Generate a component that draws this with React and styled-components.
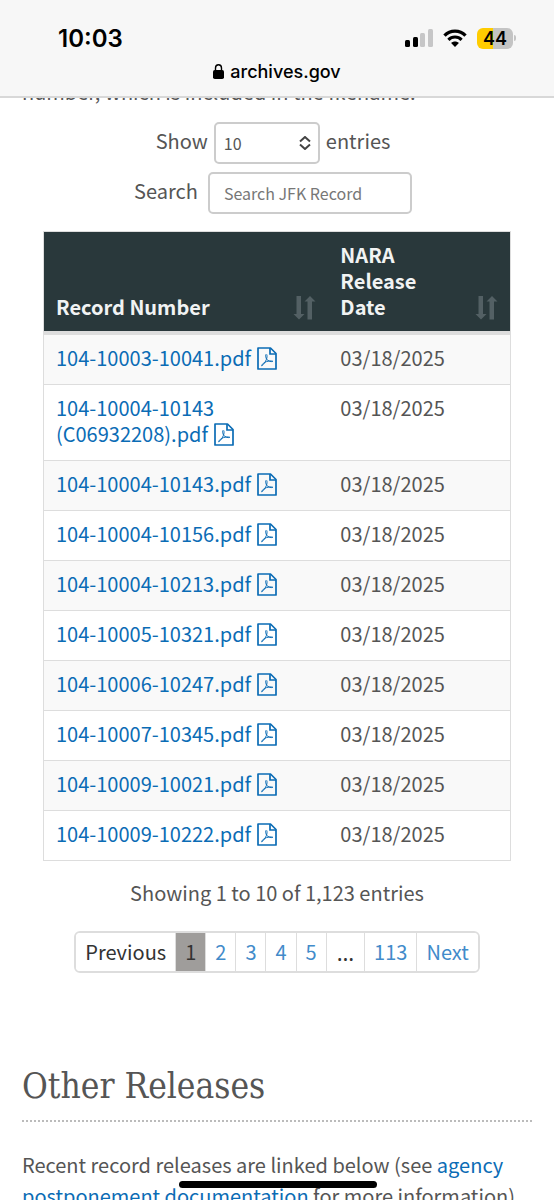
import { useState } from "react";
import styled, { createGlobalStyle } from "styled-components";

const records = [
  "104-10003-10041.pdf",
  "104-10004-10143 (C06932208).pdf",
  "104-10004-10143.pdf",
  "104-10004-10156.pdf",
  "104-10004-10213.pdf",
  "104-10005-10321.pdf",
  "104-10006-10247.pdf",
  "104-10007-10345.pdf",
  "104-10009-10021.pdf",
  "104-10009-10222.pdf",
];

const pages = ["1", "2", "3", "4", "5"];

const StatusBar = () => (
  <Status>
    <Clock>10:03</Clock>
    <StatusIcons>
      <svg width="28" height="18" viewBox="0 0 28 18">
        <rect x="0" y="11" width="5" height="7" rx="1.5" fill="#000" />
        <rect x="8" y="8" width="5" height="10" rx="1.5" fill="#000" />
        <rect x="15" y="4" width="5" height="14" rx="1.5" fill="#c6c6c7" />
        <rect x="23" y="0" width="5" height="18" rx="1.5" fill="#c6c6c7" />
      </svg>
      <svg width="24" height="18" viewBox="0 0 24 18" fill="none">
        <path d="M1.5 6.6C7.2.6 16.8.6 22.5 6.6" stroke="#000" strokeWidth="3.3" />
        <path d="M5.4 10.8c3.6-3.7 9.6-3.7 13.2 0" stroke="#000" strokeWidth="3.1" />
        <path d="M12 18l-3.9-4c2.2-2 5.6-2 7.8 0z" fill="#000" />
      </svg>
      <Battery>
        <Level>44</Level>
        <Tip />
      </Battery>
    </StatusIcons>
  </Status>
);

const PdfIcon = () => (
  <PdfSvg width="20" height="23" viewBox="0 0 20 23" fill="none" stroke="currentColor">
    <path d="M1 1h12.5L19 6.5V22H1z" strokeWidth="1.7" strokeLinejoin="round" />
    <path d="M13 1v6h6" strokeWidth="1.7" />
    <path
      d="M9 7.3c-.8 1.2-.3 3 .5 4.700M9.800 7.500c.4 1.500.3 3-.3 4.700-1 2.500-2.700 5.500-4.900 6.600.6-1.900 2.500-3.500 4.900-4.200 2.300-.6 4.600-.9 6.300-.3-1.800.9-4.700-.3-6.300-2.300"
      strokeWidth="1"
    />
  </PdfSvg>
);

const SortIcon = () => (
  <svg width="23" height="24" viewBox="0 0 23 24" fill="currentColor">
    <path d="M3.5 0h4.500v18h3.500L6 23.500.5 18h3z" />
    <path d="M14.500 23.500h4.500v-18h3.500L17 0l-5.500 5.500h3z" />
  </svg>
);

const App = () => {
  const [page, setPage] = useState("1");
  return (
    <Screen>
      <GlobalStyle />
      <Header>
        <StatusBar />
        <Address>
          <svg width="11" height="15" viewBox="0 0 11 15">
            <rect x="0" y="6" width="11" height="9" rx="1.8" fill="#000" />
            <path d="M2.5 7V4a3 3.2 0 0 1 6 0v3" fill="none" stroke="#000" strokeWidth="1.4" />
          </svg>
          archives.gov
        </Address>
      </Header>
      <Content>
        <Intro>number, which is included in the filename.</Intro>
        <Controls>
          <Control>
            <label htmlFor="length">Show</label>
            <SelectBox>
              <Select id="length" defaultValue="10">
                <option>10</option>
                <option>25</option>
                <option>50</option>
              </Select>
              <Chevrons width="12" height="14" viewBox="0 0 12 14">
                <path d="M1 5.5l5-4.5 5 4.5M1 8.5l5 4.5 5-4.5" />
              </Chevrons>
            </SelectBox>
            <label htmlFor="length">entries</label>
          </Control>
          <Control>
            <label htmlFor="search">Search</label>
            <SearchInput id="search" type="search" placeholder="Search JFK Record" />
          </Control>
        </Controls>
        <TableArea>
          <Table>
            <thead>
              <tr>
                <Th $width="61%">
                  <Sort>
                    Record Number
                    <SortIcon />
                  </Sort>
                </Th>
                <Th>
                  <Sort>
                    <span>NARA Release Date</span>
                    <SortIcon />
                  </Sort>
                </Th>
              </tr>
            </thead>
            <tbody>
              {records.map((record) => (
                <Row key={record}>
                  <Td>
                    <Link href="#">
                      {record}
                      <PdfIcon />
                    </Link>
                  </Td>
                  <Td>03/18/2025</Td>
                </Row>
              ))}
            </tbody>
          </Table>
          <Info>Showing 1 to 10 of 1,123 entries</Info>
          <Pagination>
            <PageButton $muted>Previous</PageButton>
            {pages.map((item) => (
              <PageButton key={item} $active={item === page} onClick={() => setPage(item)}>
                {item}
              </PageButton>
            ))}
            <Ellipsis $muted>…</Ellipsis>
            <PageButton $active={page === "113"} onClick={() => setPage("113")}>
              113
            </PageButton>
            <PageButton>Next</PageButton>
          </Pagination>
        </TableArea>
        <Heading>Other Releases</Heading>
        <Paragraph>
          Recent record releases are linked below (see{" "}
          <Link href="#">agency postponement documentation</Link> for more information)
        </Paragraph>
      </Content>
      <HomeIndicator />
    </Screen>
  );
};

export default App;

const GlobalStyle = createGlobalStyle`
  * {
    box-sizing: border-box;
  }
  body {
    margin: 0;
    background: #fff;
    color: #555;
    font-family: "Noto Sans CJK JP", "Noto Sans", sans-serif;
    font-size: 20px;
  }
  button, input, select {
    font-family: inherit;
  }
`;

const Screen = styled.div`
  display: flex;
  flex-direction: column;
  height: 100vh;
  overflow: hidden;
`;

const Header = styled.header`
  position: relative;
  flex-shrink: 0;
  padding: 22px 0 11px;
  background: #f7f7f7;
  border-bottom: 2px solid #d8d8d8;
  color: #000;
  font-family: Inter, sans-serif;
  font-weight: 600;
`;

const Status = styled.div`
  display: flex;
  align-items: center;
  justify-content: space-between;
  height: 32px;
  padding: 0 38px 0 58px;
`;

const Clock = styled.span`
  font-size: 24px;
`;

const StatusIcons = styled.div`
  display: flex;
  align-items: center;
  gap: 10px;
`;

const Battery = styled.div`
  display: flex;
  align-items: center;
  gap: 1px;
`;

const Level = styled.span`
  width: 36px;
  height: 21px;
  border-radius: 6px;
  background: linear-gradient(90deg, #ffcc00 44%, #c4c4c4 44%);
  font-size: 18px;
  line-height: 21px;
  text-align: center;
`;

const Tip = styled.span`
  width: 2px;
  height: 6px;
  border-radius: 0 2px 2px 0;
  background: #c4c4c4;
`;

const Address = styled.div`
  display: flex;
  align-items: center;
  justify-content: center;
  gap: 6px;
  height: 28px;
  margin-top: 3px;
  font-size: 18px;
  font-weight: 500;
`;

const Content = styled.main`
  flex: 1;
  min-height: 0;
  padding: 0 22px;
  overflow: hidden;
`;

/* scrolled halfway under the header */
const Intro = styled.p`
  margin: -22px 0 15px;
  line-height: 31px;
`;

const Controls = styled.div`
  display: flex;
  flex-direction: column;
  align-items: center;
  gap: 8px;
  margin-bottom: 17px;
  padding-right: 8px;
`;

const Control = styled.div`
  display: flex;
  align-items: center;
  gap: 6px;

  label {
    line-height: 38px;
    padding-bottom: 4px;
  }
  label + input {
    margin-left: 4px;
  }
`;

const SelectBox = styled.div`
  position: relative;
  width: 106px;
`;

const Select = styled.select`
  appearance: none;
  display: block;
  width: 100%;
  height: 42px;
  padding: 0 8px;
  border: 2px solid #ccc;
  border-radius: 5px;
  background: #fff;
  color: #555;
  font-size: 16px;
`;

const Chevrons = styled.svg`
  position: absolute;
  top: 14px;
  right: 9px;
  fill: none;
  stroke: #444;
  stroke-width: 2;
  pointer-events: none;
`;

const SearchInput = styled.input`
  appearance: none;
  width: 204px;
  height: 42px;
  padding: 0 14px;
  border: 2px solid #ccc;
  border-radius: 5px;
  font-size: 16px;

  &::placeholder {
    color: #777;
  }
`;

const TableArea = styled.section`
  padding: 0 21px;
`;

const Table = styled.table`
  width: 100%;
  table-layout: fixed;
  border-collapse: collapse;
  border: 1px solid #ddd;
`;

const Th = styled.th`
  width: ${({ $width }) => $width || "auto"};
  padding: 10px 12px 11px;
  border-bottom: 4px solid #ddd;
  background: #29383b;
  color: #f1f3f3;
  line-height: 26px;
  text-align: left;
  vertical-align: bottom;
`;

const Sort = styled.div`
  display: flex;
  align-items: flex-end;
  justify-content: space-between;

  span {
    width: 90px;
  }
  svg {
    flex-shrink: 0;
    color: #536064;
  }
`;

const Row = styled.tr`
  border-top: 1px solid #ddd;

  &:nth-child(odd) {
    background: #f9f9f9;
  }
`;

const Td = styled.td`
  padding: 10px 12px 13px;
  line-height: 26px;
  vertical-align: top;
`;

const Link = styled.a`
  color: #0b6cb5;
  text-decoration: none;
`;

const PdfSvg = styled.svg`
  margin-left: 6px;
  vertical-align: -4px;
`;

const Info = styled.p`
  margin: 16px 0 23px;
  line-height: 31px;
  text-align: center;
`;

const Pagination = styled.nav`
  display: flex;
  width: fit-content;
  margin: 0 auto;
  border: 2px solid #ddd;
  border-radius: 6px;
  overflow: hidden;
`;

const PageButton = styled.button`
  height: 38px;
  padding: 0 9px;
  border: 0;
  border-right: 1px solid #ddd;
  background: ${({ $active }) => ($active ? "#9f9d9b" : "#fff")};
  color: ${({ $active, $muted }) => ($active || $muted ? "#333" : "#428bca")};
  font-size: 20px;
  line-height: 38px;
  cursor: pointer;

  &:last-child {
    border-right: 0;
  }
`;

const Ellipsis = styled(PageButton)`
  padding: 0 10px;
  font-family: "Noto Sans", sans-serif;
  font-size: 22px;
`;

const Heading = styled.h2`
  margin: 90px 0 27px;
  padding-bottom: 11px;
  border-bottom: 2px dotted #bbb;
  font-family: "DejaVu Serif Condensed", "DejaVu Serif", serif;
  font-size: 35px;
  font-weight: 400;
  line-height: 46px;
`;

const Paragraph = styled.p`
  margin: 0;
  line-height: 31px;
`;

const HomeIndicator = styled.div`
  position: fixed;
  bottom: 12px;
  left: 50%;
  width: 198px;
  height: 7px;
  margin-left: -98px;
  border-radius: 4px;
  background: #000;
`;
